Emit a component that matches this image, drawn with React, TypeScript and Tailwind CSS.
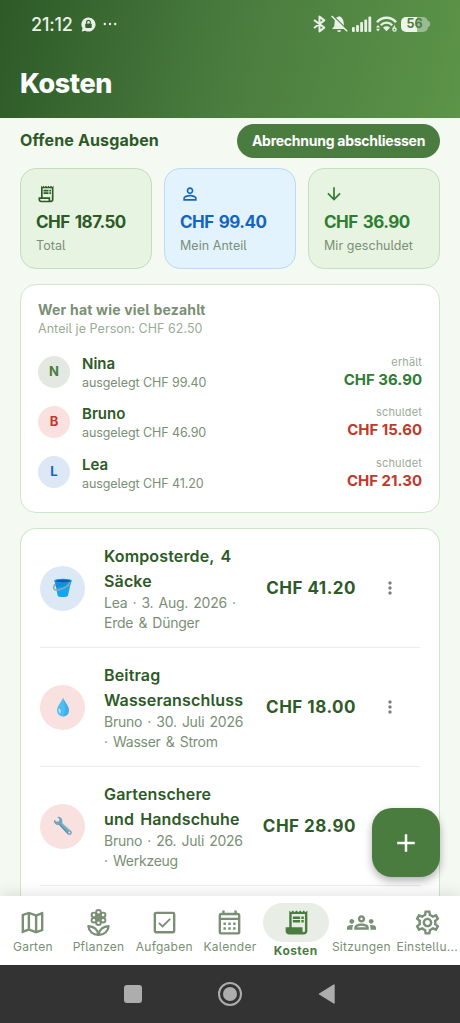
import type { ReactNode } from 'react';
import {
  MdAdd,
  MdArrowDownward,
  MdMoreVert,
  MdOutlineCalendarMonth,
  MdOutlineGroups,
  MdOutlineMap,
  MdOutlineReceiptLong,
  MdOutlineSettings,
  MdPersonOutline,
  MdReceiptLong,
} from 'react-icons/md';

const stats = [
  {
    label: 'Total',
    value: 'CHF 187.50',
    icon: <MdOutlineReceiptLong size={20} />,
    box: 'bg-[#e8f4e2] border-[#c6dcbf] text-[#2d5a27]',
  },
  {
    label: 'Mein Anteil',
    value: 'CHF 99.40',
    icon: <MdPersonOutline size={20} />,
    box: 'bg-[#e3f3fd] border-[#bdd9f3] text-[#1565c0]',
  },
  {
    label: 'Mir geschuldet',
    value: 'CHF 36.90',
    icon: <MdArrowDownward size={20} />,
    box: 'bg-[#e8f4e2] border-[#c3e0bf] text-[#2e7d32]',
  },
];

const members = [
  { name: 'Nina', paid: 'CHF 99.40', status: 'erhält', amount: 'CHF 36.90', avatar: 'bg-[#e3e9e1] text-[#4a7c3f]', color: 'text-[#2e7d32]' },
  { name: 'Bruno', paid: 'CHF 46.90', status: 'schuldet', amount: 'CHF 15.60', avatar: 'bg-[#f8e1df] text-[#c0392b]', color: 'text-[#c0392b]' },
  { name: 'Lea', paid: 'CHF 41.20', status: 'schuldet', amount: 'CHF 21.30', avatar: 'bg-[#dce8f6] text-[#1565c0]', color: 'text-[#c0392b]' },
];

const expenses = [
  { title: 'Komposterde, 4 Säcke', meta: 'Lea · 3. Aug. 2026 · Erde & Dünger', amount: 'CHF 41.20', icon: <BucketIcon />, bg: 'bg-[#dce8f6]' },
  { title: 'Beitrag Wasseranschluss', meta: 'Bruno · 30. Juli 2026 · Wasser & Strom', amount: 'CHF 18.00', icon: <DropIcon />, bg: 'bg-[#f8e1df]' },
  { title: 'Gartenschere und Handschuhe', meta: 'Bruno · 26. Juli 2026 · Werkzeug', amount: 'CHF 28.90', icon: <WrenchIcon />, bg: 'bg-[#f8e1df]' },
];

const tabs: { label: string; icon: ReactNode; active?: boolean }[] = [
  { label: 'Garten', icon: <MdOutlineMap size={29} /> },
  { label: 'Pflanzen', icon: <FlowerIcon /> },
  { label: 'Aufgaben', icon: <CheckboxIcon /> },
  { label: 'Kalender', icon: <MdOutlineCalendarMonth size={29} /> },
  { label: 'Kosten', icon: <MdReceiptLong size={29} />, active: true },
  { label: 'Sitzungen', icon: <MdOutlineGroups size={29} /> },
  { label: 'Einstellu...', icon: <MdOutlineSettings size={29} /> },
];

// petals sit on a circle around the flower's centre
const petals = [
  [12, 3.6],
  [15.8, 5.7],
  [15.8, 10.1],
  [12, 12.2],
  [8.2, 10.1],
  [8.2, 5.7],
];

function FlowerIcon() {
  return (
    <svg width="29" height="29" viewBox="0 0 24 24">
      {petals.map(([x, y]) => (
        <circle key={`${x}-${y}`} cx={x} cy={y} r="2.7" fill="currentColor" />
      ))}
      <circle cx="12" cy="7.9" r="4.2" fill="currentColor" />
      {petals.map(([x, y]) => (
        <circle key={`${x}-${y}`} cx={x} cy={y} r="1.05" fill="#fff" />
      ))}
      <g fill="none" stroke="currentColor" strokeWidth="1.8" strokeLinejoin="round">
        <path d="M11.8 22.2 C7.4 22.2 4 19.4 3.6 15 C8.2 15.2 11.6 18 11.8 22.2 Z" />
        <path d="M12.2 22.2 C16.6 22.2 20 19.4 20.4 15 C15.8 15.2 12.4 18 12.2 22.2 Z" />
      </g>
    </svg>
  );
}

function CheckboxIcon() {
  return (
    <svg width="29" height="29" viewBox="0 0 24 24" fill="none" stroke="currentColor">
      <rect x="4" y="4" width="16" height="16" rx="1" strokeWidth="2" />
      <path d="M7.4 12.3 L10.4 15.3 L16.7 9" strokeWidth="1.6" />
    </svg>
  );
}

function BucketIcon() {
  return (
    <svg width="20" height="20" viewBox="0 0 20 20">
      <path d="M1.8 3 L4.6 17.4 C4.9 19.6 14.6 19.6 15 17.4 L18.2 3 Z" fill="#12a5f2" />
      <path d="M1.8 3 L3 9 C6 10 12 8 17.4 6.4 L18.2 3 Z" fill="#0d91df" />
      <ellipse cx="10" cy="3" rx="9" ry="2.3" fill="#1e9be8" />
      <ellipse cx="10" cy="3" rx="7.6" ry="1.4" fill="#0b5fa8" />
      <path d="M1.6 6.6 C-0.8 11.4 2 12.8 6 11.8 C10 10.8 14.6 8.6 16.6 5.2" fill="none" stroke="#9aa5ab" strokeWidth="1.5" strokeLinecap="round" />
    </svg>
  );
}

function DropIcon() {
  return (
    <svg width="20" height="20" viewBox="0 0 20 20">
      <path d="M10 .6 C10.9 4.6 16 8.8 16 13.6 A6 5.8 0 0 1 4 13.6 C4 8.8 9.1 4.6 10 .6 Z" fill="#4fbdf3" />
      <path d="M10 .6 C10.9 4.6 16 8.8 16 13.6 A6 5.8 0 0 1 10 19.4 C13 16 12 7 10 .6 Z" fill="#3fb0ea" />
      <ellipse cx="6.6" cy="13.8" rx="1.2" ry="2.4" fill="#b3e5fc" transform="rotate(-12 6.6 13.8)" />
    </svg>
  );
}

function WrenchIcon() {
  return (
    <svg width="20" height="20" viewBox="0 0 20 20">
      <path
        d="M4.4 .9 L6.5 3.2 L6 5.2 L3.8 5.8 L1.2 3.7 C.3 6.6 2.6 9.6 6 8.9 L14.6 18.2 C16.8 20.4 20.3 17.4 18.2 15 L9.2 7 C10.2 3.4 7.6 .2 4.4 .9 Z"
        fill="#6fa5bd"
      />
      <path d="M6.5 8.4 L15 17.6" stroke="#4f87a2" strokeWidth="1" />
      <path d="M8.6 7.4 L16.6 14.6" stroke="#93c3d6" strokeWidth="1" />
      <circle cx="16.3" cy="16.5" r="1" fill="#f8e1df" />
    </svg>
  );
}

function StatusBar() {
  return (
    <div className="flex h-12 items-center pl-[31px] pr-[30px] text-[#e9f0e7]">
      <span className="w-[50px] text-[18px] font-medium tracking-[-0.2px]">21:12</span>
      <svg width="15" height="15" viewBox="0 0 15 15">
        <path d="M7.5 .5 A7 7 0 1 1 4.3 13.7 L.8 14.4 L1.5 11.2 A7 7 0 0 1 7.5 .5 Z" fill="currentColor" />
        <rect x="4.3" y="6.4" width="6.4" height="4.6" rx=".8" fill="#35632e" />
        <path d="M5.6 6.6 V5.2 a1.9 1.9 0 0 1 3.8 0 V6.6" fill="none" stroke="#35632e" strokeWidth="1.2" />
      </svg>
      <svg className="ml-[7px]" width="14" height="4" viewBox="0 0 14 4">
        <circle cx="1.8" cy="2" r="1.2" fill="currentColor" />
        <circle cx="7" cy="2" r="1.2" fill="currentColor" />
        <circle cx="12.2" cy="2" r="1.2" fill="currentColor" />
      </svg>

      <div className="ml-auto flex items-center">
        <svg width="13" height="18" viewBox="0 0 13 18">
          <path d="M1 5 L11.3 12.6 L6.5 16.4 V1.6 L11.3 5.4 L1 13" fill="none" stroke="currentColor" strokeWidth="2" strokeLinejoin="round" />
        </svg>
        <svg className="ml-[5px]" width="17" height="18" viewBox="0 0 17 18">
          <path d="M8.3 1.2 C4.6 2 3.6 4.6 3.6 8 L3.2 11.2 L1 14 H14.8 L13 11.6 C12.8 9 13.4 3 8.3 1.2 Z" fill="currentColor" />
          <path d="M6.2 15.2 H10 A1.9 1.9 0 0 1 6.2 15.2 Z" fill="currentColor" />
          <path d="M1.4 .2 L17 15.4" stroke="#528742" strokeWidth="1.4" />
          <path d="M.6 1 L16.2 16.2" stroke="currentColor" strokeWidth="1.6" />
        </svg>
        <svg className="ml-1" width="20" height="16" viewBox="0 0 20 16">
          <rect x="0" y="11" width="2.8" height="5" rx="1" fill="currentColor" />
          <rect x="4.1" y="9" width="2.8" height="7" rx="1" fill="currentColor" />
          <rect x="8.2" y="6" width="2.8" height="10" rx="1" fill="currentColor" />
          <rect x="12.3" y="3.4" width="2.8" height="12.6" rx="1" fill="currentColor" />
          <rect x="16.4" y=".6" width="2.8" height="15.4" rx="1" fill="currentColor" />
        </svg>
        <svg className="ml-1" width="21" height="16" viewBox="0 0 21 16">
          <path d="M1 6.2 C6 .2 15 .2 20 6.2" fill="none" stroke="currentColor" strokeWidth="2.4" />
          <path d="M4.8 9.2 C8 5.8 13 5.8 16.2 9.2" fill="none" stroke="currentColor" strokeWidth="2.4" />
          <path d="M7 11.4 C9 9.8 12 9.8 14 11.4 L10.5 15.2 Z" fill="currentColor" />
          <path d="M0 11.6 L2 9 L4 11.6 Z M0 12.8 H4 L2 15.6 Z" fill="currentColor" />
          <path d="M18.8 9.6 L17 13" stroke="currentColor" strokeWidth="1.2" />
          <circle cx="18.5" cy="13.6" r="1.6" fill="none" stroke="currentColor" strokeWidth="1.3" />
        </svg>
        <div className="ml-1 flex items-center">
          <div className="flex h-[15px] w-[27px] items-center justify-center rounded-[5px] bg-linear-to-r from-[#eef4ec] from-60% to-[#9abb90] to-60% text-[12.5px] font-bold text-[#4c7f40]">
            56
          </div>
          <div className="h-[6px] w-[2px] rounded-r-full bg-[#9abb90]" />
        </div>
      </div>
    </div>
  );
}

function ExpenseRow({ title, meta, amount, icon, bg }: (typeof expenses)[number]) {
  return (
    <div className="flex h-[119px] shrink-0 items-center border-b border-[#eceeec]">
      <div className={`flex size-[45px] shrink-0 items-center justify-center rounded-full ${bg}`}>{icon}</div>
      <div className="ml-[19px] w-[142px] shrink-0">
        <div className="text-[16px] font-semibold leading-[24.5px] tracking-[0.15px] text-[#2d5a27] [word-spacing:2px]">{title}</div>
        <div className="text-[14px] leading-[19.5px] tracking-[-0.25px] text-[#7a8f75] [word-spacing:1.5px]">{meta}</div>
      </div>
      <div className="w-[110px] pt-[2px] text-right text-[17px] font-bold tracking-[0.5px] text-[#2d5a27]">{amount}</div>
      <MdMoreVert className="ml-[24px] text-[#7b8379]" size={20} />
    </div>
  );
}

export default function App() {
  return (
    <div className="relative flex h-[1023px] w-[460px] flex-col overflow-hidden bg-[#f4f9f1] font-['Inter','Noto_Sans',sans-serif] [font-feature-settings:'cv05']">
      {/* Header */}
      <header className="h-[118px] shrink-0 bg-[linear-gradient(104deg,#2d5a27_0%,#4a7c3f_50%,#5c9448_100%)]">
        <StatusBar />
        <h1 className="mt-[18px] pl-5 text-[27px] font-extrabold leading-[36px] tracking-[-0.4px] text-white">Kosten</h1>
      </header>

      <main className="flex min-h-0 flex-1 flex-col overflow-hidden px-5">
        <div className="flex h-[50px] shrink-0 items-center justify-between pb-[5px]">
          <h2 className="pb-px text-[16px] font-bold tracking-[0.15px] text-[#2d5a27]">Offene Ausgaben</h2>
          <button className="h-[34px] w-[203px] rounded-full bg-[#4a7c3f] text-[14px] font-bold tracking-[-0.26px] text-white">
            Abrechnung abschliessen
          </button>
        </div>

        {/* Totals */}
        <div className="grid shrink-0 grid-cols-3 gap-3">
          {stats.map((s) => (
            <div key={s.label} className={`h-[101px] rounded-2xl border pl-[15px] pt-[15px] ${s.box}`}>
              {s.icon}
              <div className="mt-[6px] whitespace-nowrap text-[17px] font-bold leading-6 tracking-[-0.5px] [word-spacing:1.5px]">{s.value}</div>
              <div className="mt-[3px] text-[12.5px] leading-[18px] tracking-[0.05px] text-[#7a8f75]">{s.label}</div>
            </div>
          ))}
        </div>

        {/* Who paid how much */}
        <section className="mt-[15px] h-[229px] shrink-0 rounded-2xl border border-[#d0e6c9] bg-white px-[17px] pt-4">
          <h3 className="text-[14px] font-bold leading-[18px] tracking-[0.2px] text-[#7a8f75]">Wer hat wie viel bezahlt</h3>
          <p className="mt-px text-[12.5px] leading-[18px] tracking-[0.05px] text-[#9bab96]">Anteil je Person: CHF 62.50</p>
          <div className="mt-[14px]">
            {members.map((m) => (
              <div key={m.name} className="flex h-[50.3px] items-start">
                <div className={`mt-[3.5px] flex size-8 items-center justify-center rounded-full text-[13px] font-bold ${m.avatar}`}>
                  {m.name[0]}
                </div>
                <div className="ml-3 flex-1 pt-[2px]">
                  <div className="text-[15px] font-semibold leading-5 text-[#2d5a27]">{m.name}</div>
                  <div className="text-[12.5px] leading-[18px] tracking-[-0.08px] text-[#7a8f75]">ausgelegt {m.paid}</div>
                </div>
                <div className="pt-[2px] text-right">
                  <div className="text-[11px] leading-4 tracking-[0.15px] text-[#9bab96]">{m.status}</div>
                  <div className={`text-[15px] font-bold leading-5 ${m.color}`}>{m.amount}</div>
                </div>
              </div>
            ))}
          </div>
        </section>

        {/* Open expenses */}
        <section className="mt-[15px] flex min-h-0 flex-1 flex-col overflow-hidden rounded-t-2xl border border-b-0 border-[#d0e6c9] bg-white px-[19px]">
          {expenses.map((e) => (
            <ExpenseRow key={e.title} {...e} />
          ))}
        </section>
      </main>

      <button className="absolute left-[372px] top-[808px] flex h-[69px] w-[68px] items-center justify-center rounded-[20px] bg-[#4a7c3f] text-white shadow-[0_4px_8px_rgba(0,0,0,0.3)]">
        <MdAdd size={30} />
      </button>

      {/* Tab bar */}
      <nav className="relative grid h-[69px] shrink-0 grid-cols-7 bg-white shadow-[0_-3px_14px_rgba(0,0,0,0.1)]">
        {tabs.map((t) => (
          <div key={t.label} className={`flex flex-col items-center pt-[7px] ${t.active ? 'text-[#4a7c3f]' : 'text-[#7a8f75]'}`}>
            <div className={t.active ? 'flex h-[39px] w-full items-center justify-center rounded-full bg-[#e8eee6] pl-[2px]' : 'flex h-[38px] items-center'}>
              {t.icon}
            </div>
            <span
              className={`whitespace-nowrap text-[12px] leading-4 ${t.active ? 'mt-[1px] font-bold tracking-[0.45px]' : 'mt-[-2px] font-normal tracking-[0.25px]'}`}
            >
              {t.label}
            </span>
          </div>
        ))}
      </nav>

      {/* Android navigation */}
      <div className="relative flex h-[58px] shrink-0 items-center justify-center gap-[76px] bg-[#333333] pr-[1px]">
        <div className="size-[18px] rounded-[3px] bg-[#adadad]" />
        <div className="flex size-6 items-center justify-center rounded-full border-2 border-[#adadad]">
          <div className="size-[14px] rounded-full bg-[#adadad]" />
        </div>
        <svg width="18" height="20" viewBox="0 0 18 20">
          <path d="M16 1 V19 L1.5 10 Z" fill="#adadad" stroke="#adadad" strokeWidth="1.4" strokeLinejoin="round" />
        </svg>
      </div>
    </div>
  );
}
